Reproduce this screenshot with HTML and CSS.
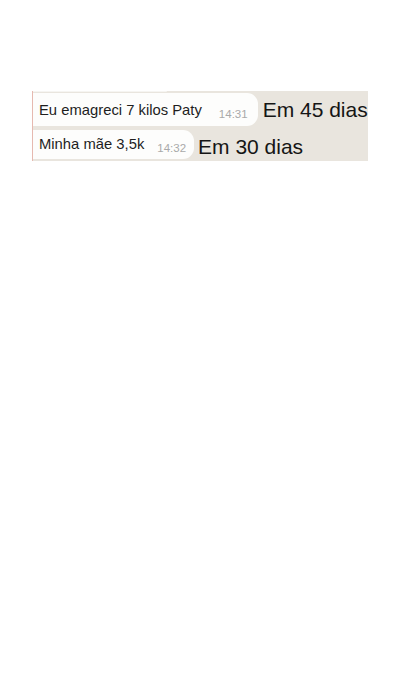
FILE: index.html
```html
<!DOCTYPE html>
<html>
<head>
<meta charset="utf-8">
<link rel="stylesheet" href="styles.css">
</head>
<body>
<div class="page">
  <div class="chat">
    <div class="prev-bubble"></div>
    <div class="row row-1">
      <div class="bubble">
        <span class="msg">Eu emagreci 7 kilos Paty</span>
        <span class="time">14:31</span>
      </div>
      <span class="note">Em 45 dias</span>
    </div>
    <div class="row row-2">
      <div class="bubble">
        <span class="msg">Minha mãe 3,5k</span>
        <span class="time">14:32</span>
      </div>
      <span class="note">Em 30 dias</span>
    </div>
  </div>
</div>
</body>
</html>
```

FILE: styles.css
```css
html, body {
  margin: 0;
  padding: 0;
  background: #ffffff;
}
.page {
  width: 400px;
  height: 700px;
  padding-top: 91px;
  box-sizing: border-box;
}
.chat {
  margin-left: 32px;
  width: 336px;
  height: 70px;
  background: #e9e5de;
  border-left: 1.5px solid #e6b9b0;
  box-sizing: border-box;
  display: flex;
  flex-direction: column;
  overflow: hidden;
  font-family: "Liberation Sans", Arial, sans-serif;
}
.prev-bubble {
  width: 134px;
  height: 1px;
  background: #f6f5f2;
  border-radius: 0 0 4px 0;
  margin-bottom: 1px;
}
.row {
  display: flex;
  align-items: center;
}
.row-2 {
  margin-top: 3px;
}
.bubble {
  background: #fdfdfc;
  border-radius: 0 11px 11px 0;
  display: flex;
  align-items: flex-end;
  height: 33px;
  box-sizing: border-box;
  padding: 0 10px 0 6px;
}
.row-2 .bubble {
  height: 29px;
  padding-right: 8px;
}
.msg {
  font-size: 14.8px;
  color: #1e1e1e;
  line-height: 30px;
  align-self: center;
}
.time {
  font-size: 11.5px;
  color: #a9a9a9;
  margin-left: 17px;
  padding-bottom: 6px;
}
.row-2 .time {
  margin-left: 13px;
  padding-bottom: 5px;
}
.note {
  font-size: 21px;
  color: #151515;
  margin-left: 5px;
  white-space: nowrap;
}
.row-2 .note {
  margin-left: 4px;
  padding-top: 6px;
}
```
